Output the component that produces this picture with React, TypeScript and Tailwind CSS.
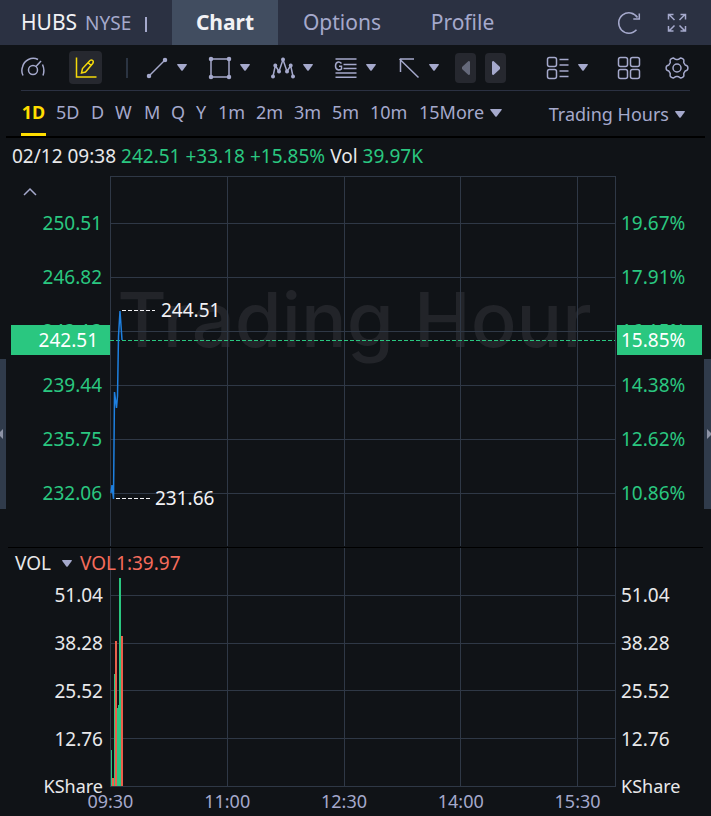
import { ReactNode } from 'react'

const PERIODS = ['5D', 'D', 'W', 'M', 'Q', 'Y', '1m', '2m', '3m', '5m', '10m']
const PERIOD_WIDTHS: Record<string, string> = {
  '5D': 'w-[35px]',
  D: 'w-[24px]',
  W: 'w-[29px]',
  M: 'w-[27px]',
  Q: 'w-[25px]',
  Y: 'w-[22px]',
  '10m': 'w-[49px]',
}
const PRICES = ['250.51', '246.82', '243.13', '239.44', '235.75', '232.06']
const PERCENTS = ['19.67%', '17.91%', '16.15%', '14.38%', '12.62%', '10.86%']
const VOLUMES = ['51.04', '38.28', '25.52', '12.76']
const TIMES = ['09:30', '11:00', '12:30', '14:00', '15:30']

const SESSION_MINUTES = 390
const GRID_X = [90, 180, 270, 360].map((m) => `${(m / SESSION_MINUTES) * 100}%`)
const PRICE_Y = [47, 101, 155, 209, 263, 317]
const VOLUME_Y = [47, 95, 142, 190]

const BARS = [
  { x: 1, w: 1, h: 36, up: true },
  { x: 2, w: 2, h: 8, up: false },
  { x: 4, w: 1, h: 112, up: true },
  { x: 5, w: 2, h: 145, up: false },
  { x: 7, w: 1, h: 78, up: true },
  { x: 8, w: 1, h: 81, up: true },
  { x: 9, w: 2, h: 208, up: true },
  { x: 11, w: 2, h: 150, up: false },
]

// six rounded teeth around the hub
const GEAR = Array.from({ length: 72 }, (_, i) => {
  const a = (i / 72) * Math.PI * 2
  const r = 9.7 + 1.2 * Math.tanh(2 * Math.cos(6 * a))
  return `${(12 + r * Math.cos(a)).toFixed(2)},${(12 + r * Math.sin(a)).toFixed(2)}`
}).join(' ')

function Caret({ big = false }: { big?: boolean }) {
  return (
    <svg className={big ? 'w-3 h-2' : 'w-2.5 h-[7px]'} viewBox="0 0 10 7" preserveAspectRatio="none" fill="currentColor">
      <path d="M0.7 0h8.6q1 0 .4.9L5.7 6.4q-.7.9-1.4 0L.3.9Q-.3 0 .7 0z" />
    </svg>
  )
}

function Icon({ children }: { children: ReactNode }) {
  return (
    <svg className="w-6 h-6" viewBox="0 0 24 24" fill="none" stroke="currentColor" strokeWidth="1.5">
      {children}
    </svg>
  )
}

function Tool({ label, children }: { label: string; children: ReactNode }) {
  return (
    <button aria-label={label} className="flex items-center w-[63px] gap-2">
      <Icon>{children}</Icon>
      <Caret />
    </button>
  )
}

function Header() {
  return (
    <header className="flex items-center h-[45px] bg-[#2b3142] text-[#a5a9cc]">
      <div className="flex items-center w-[172px] pl-[21px] text-[21px]">
        <span className="text-[#f2f2f5]">HUBS</span>
        <span className="ml-2 pt-0.5 text-[19px]">NYSE</span>
        <span className="ml-[14px] mt-1 w-0.5 h-[15px] bg-[#a5a9cc]" />
      </div>
      <nav className="flex h-full text-[21px]">
        <button className="w-[106px] bg-[#414d60] text-[#f2f2f5] font-bold">Chart</button>
        <button className="w-[128px]">Options</button>
        <button className="w-[113px]">Profile</button>
      </nav>
      <div className="flex items-center gap-6 ml-auto pr-[22px]">
        <button aria-label="Refresh">
          <Icon>
            <path d="M19.500 18.800A10.200 10.200 0 1 1 20.500 6.500" />
            <path d="M22.300 2.500V8h-6" />
          </Icon>
        </button>
        <button aria-label="Full screen">
          <Icon>
            <path d="M9.500 9L4 3.500M3.500 8.500v-5h5M14.500 9L20 3.500M15.500 3.500h5v5M9.500 14.500L4 20M3.500 15v5h5M14.500 14.500L20 20M15.500 20h5v-5" />
          </Icon>
        </button>
      </div>
    </header>
  )
}

function Toolbar() {
  return (
    <div className="flex items-center h-[46px] mx-[21px] border-b border-[#2b3142] text-[#a5a9cc]">
      <button aria-label="Indicators">
        <Icon>
          <path d="M2 19.500A11 11 0 0 1 1.500 11 11 11 0 0 1 17 3.500M21.500 8.500q2.500 5.500.5 11" />
          <circle cx="12" cy="14" r="4.500" />
          <path d="M15 10.500L20 5" />
        </Icon>
      </button>
      <button aria-label="Draw" className="flex items-center justify-center w-[33px] h-[33px] ml-6 rounded-sm bg-[#26282f] text-[#f5d90a]">
        <Icon>
          <path d="M2.500 1.500v19.500H22.500" />
          <path d="M7.500 17l1-4.500L16 4.500q1.500-1 2.700 0t0 3L11.500 16zM14 6.500l3 3" />
        </Icon>
      </button>
      <span className="w-0.5 h-5 ml-6 mr-[17px] bg-[#2b3442]" />
      <div className="flex">
        <Tool label="Line">
          <path d="M4 20L20 4" />
          <circle cx="4" cy="20" r="1.500" fill="currentColor" />
          <circle cx="20" cy="4" r="1.500" fill="currentColor" />
        </Tool>
        <Tool label="Shape">
          <path d="M3 3h18v18H3z" />
          <path d="M3 3h.01M21 3h.01M3 21h.01M21 21h.01" strokeWidth="4.500" strokeLinecap="round" />
        </Tool>
        <Tool label="Wave">
          <path d="M2 20.500L4.300 9.500 8 15.500l4-12 4 12 3.700-6L22 20.500" />
          <path d="M2 20.500h.01M4.300 9.500h.01M8 15.500h.01M12 3.500h.01M16 15.500h.01M19.700 9.500h.01M22 20.500h.01" strokeWidth="4" strokeLinecap="round" />
        </Tool>
        <Tool label="Gann">
          <path d="M1.500 3h21M9.500 8.500h13M9.500 12.500h13M1.500 17h21M1.500 21.200h21" />
          <path d="M7.500 7.500Q6 5.800 4.300 6 1.500 6.500 1.500 10t3 4q2 0 3-1v-2.700H5" />
        </Tool>
        <Tool label="Arrow">
          <path d="M2.500 3L21.500 21.500M3.500 16V3H17" />
        </Tool>
      </div>
      <button aria-label="Previous tools" className="flex items-center justify-center w-[21px] h-[30px] -ml-[5px] rounded-sm bg-[#26282f] text-[#65697a]">
        <svg className="w-2 h-[14px]" viewBox="0 0 8 14" fill="currentColor"><path d="M8 1v12q0 1-1.500 1L0 8V6L6.500 0Q8 0 8 1z" /></svg>
      </button>
      <button aria-label="Next tools" className="flex items-center justify-center w-[21px] h-[30px] ml-[9px] rounded-sm bg-[#26282f]">
        <svg className="w-2 h-[14px]" viewBox="0 0 8 14" fill="currentColor"><path d="M0 1v12q0 1 1.500 1L8 8V6L1.500 0Q0 0 0 1z" /></svg>
      </button>
      <div className="flex items-center ml-auto pr-px">
        <Tool label="Layout list">
          <rect x="1.500" y="1.500" width="9" height="9" rx="2" />
          <rect x="1.500" y="13.500" width="9" height="9" rx="2" />
          <path d="M13.500 3.500h9M13.500 9h9M13.500 15h9M13.500 20.500h9" />
        </Tool>
        <button aria-label="Grid layout" className="ml-2">
          <Icon>
            <rect x="1.500" y="1.500" width="9" height="9" rx="2" />
            <rect x="13.500" y="1.500" width="9" height="9" rx="2" />
            <rect x="1.500" y="13.500" width="9" height="9" rx="2" />
            <rect x="13.500" y="13.500" width="9" height="9" rx="2" />
          </Icon>
        </button>
        <button aria-label="Settings" className="ml-6">
          <Icon>
            <circle cx="12" cy="12" r="4" />
            <polygon points={GEAR} strokeLinejoin="round" />
          </Icon>
        </button>
      </div>
    </div>
  )
}

function Periods() {
  return (
    <div className="flex h-[45px] mx-[21px] text-[18px] text-[#a5a9cc]">
      <button className="w-[25px] mr-[10px] h-full border-b-3 border-[#ffdd00] text-[#ffdd00] font-bold">1D</button>
      {PERIODS.map((p) => (
        <button key={p} className={`${PERIOD_WIDTHS[p] ?? 'w-[38px]'} pb-0.5 text-left`}>{p}</button>
      ))}
      <button className="pb-0.5">15</button>
      <button className="flex items-center gap-1.5 pb-0.5">More <Caret big /></button>
      <button className="flex items-center gap-1.5 ml-auto pr-[5px] pt-0.5">Trading Hours <Caret /></button>
    </div>
  )
}

function PricePanel() {
  return (
    <section className="relative flex h-[372px] text-[19px] text-[#2ac780] mx-2 border-b border-black">
      <div className="w-[102px] pt-5 pr-2 text-right">
        {PRICES.map((p) => (
          <div key={p} className="h-[54px] leading-[54px]">{p}</div>
        ))}
      </div>
      <button aria-label="Collapse" className="absolute left-[15px] top-[11px] text-[#a5a9cc]">
        <svg className="w-[14px] h-[9px]" viewBox="0 0 14 9" fill="none" stroke="currentColor" strokeWidth="1.500"><path d="M1 8l6-6 6 6" /></svg>
      </button>
      <div className="relative flex-1 border-r border-[#2f3846]">
        <div className="absolute inset-0 flex items-center justify-center pr-4 pb-[86px] text-[76px] font-medium text-[#222429] font-[Inter,sans-serif] whitespace-nowrap">Trading Hour</div>
        <svg className="absolute inset-0 w-full h-full" shapeRendering="crispEdges">
          <g stroke="#2f3846">
            <path d="M0.500 0v370" />
            <line x1="0" x2="100%" y1="0.500" y2="0.500" />
            <g transform="translate(1 0)">
              {GRID_X.map((x) => <line key={x} x1={x} x2={x} y1="0" y2="370" />)}
            </g>
            {PRICE_Y.map((y) => <line key={y} x1="0" x2="100%" y1={y + 0.5} y2={y + 0.5} />)}
          </g>
          <line x1="0" x2="100%" y1="164.500" y2="164.500" stroke="#2ac780" strokeDasharray="4 2" />
          <path d="M12 134.500h33M6 322.500h34" stroke="#f2f2f5" strokeDasharray="4 2" />
          <path d="M1 317l1-8 1.500 14L4.500 216l2 16 1-12L8.500 160l1.500-25 2 29" stroke="#1e80e0" strokeWidth="1.500" fill="none" shapeRendering="auto" />
        </svg>
        <span className="absolute left-[51px] top-[120px] leading-7 text-[#f2f2f5]">244.51</span>
        <span className="absolute left-[45px] top-[308px] leading-7 text-[#f2f2f5]">231.66</span>
      </div>
      <div className="w-[87px] pt-5 pl-[5px]">
        {PERCENTS.map((p) => (
          <div key={p} className="h-[54px] leading-[54px]">{p}</div>
        ))}
      </div>
      <div className="absolute left-[3px] top-[149px] w-[99px] h-[30px] pr-3 bg-[#2ac780] text-white text-right leading-[30px]">242.51</div>
      <div className="absolute right-[1px] top-[149px] w-[85px] h-[30px] pl-1 bg-[#2ac780] text-white leading-[30px]">15.85%</div>
    </section>
  )
}

function VolumeScale() {
  return (
    <>
      {VOLUMES.map((v) => (
        <div key={v} className="h-12 leading-[48px]">{v}</div>
      ))}
      <div className="text-[18px] leading-[46px]">KShare</div>
    </>
  )
}

function VolumePanel() {
  return (
    <section className="text-[19px] text-[#e8e8ea] mx-2">
      <div className="relative flex h-[239px]">
        <div className="w-[102px] pt-[23px] pr-[7px] text-right">
          <VolumeScale />
        </div>
        <div className="flex-1 border-r border-[#2f3846]">
          <svg className="w-full h-full" shapeRendering="crispEdges">
            <g stroke="#2f3846">
              <path d="M0.500 0v239" />
              <line x1="0" x2="100%" y1="238.500" y2="238.500" />
              <g transform="translate(1 0)">
                {GRID_X.map((x) => <line key={x} x1={x} x2={x} y1="0" y2="239" />)}
              </g>
              {VOLUME_Y.map((y) => <line key={y} x1="0" x2="100%" y1={y + 0.5} y2={y + 0.5} />)}
            </g>
            {BARS.map((b) => (
              <rect key={b.x} x={b.x} y={238 - b.h} width={b.w} height={b.h} fill={b.up ? '#2ac780' : '#e8604c'} />
            ))}
          </svg>
        </div>
        <div className="w-[87px] pt-[23px] pl-[5px]">
          <VolumeScale />
        </div>
        <div className="absolute left-[7px] top-px flex items-center leading-7">
          <button className="flex items-center gap-[11px]">VOL <span className="text-[#a5a9cc]"><Caret /></span></button>
          <span className="ml-2 text-[#f56c5c]">VOL1:39.97</span>
        </div>
      </div>
      <div className="grid grid-cols-5 pl-11 pr-[67px] h-7 text-[18px] leading-7 text-center text-[#a5a9cc]">
        {TIMES.map((t) => <span key={t}>{t}</span>)}
      </div>
    </section>
  )
}

export default function App() {
  return (
    <main className="relative min-h-screen bg-[#101317] font-['Noto_Sans',sans-serif]">
      <Header />
      <Toolbar />
      <Periods />
      <div className="mx-1.5 border-t-2 border-black" />
      <div className="flex items-center gap-[5px] h-[38px] pl-3 pb-0.5 text-[19px] text-[#2ac780]">
        <span className="text-[#e8e8ea]">02/12 09:38</span>
        <span>242.51</span>
        <span>+33.18</span>
        <span>+15.85%</span>
        <span className="text-[#e8e8ea]">Vol</span>
        <span>39.97K</span>
      </div>
      <PricePanel />
      <VolumePanel />
      <button aria-label="Open left panel" className="absolute left-0 top-[359px] flex items-center w-1.5 h-[150px] bg-[#303b4b] text-[#8d93a5]">
        <svg className="w-[3px] h-2.5" viewBox="0 0 3 10" fill="currentColor"><path d="M3 0v10L0 7V3z" /></svg>
      </button>
      <button aria-label="Open right panel" className="absolute right-0 top-[359px] flex items-center justify-end w-[7px] h-[150px] bg-[#303b4b] text-[#8d93a5]">
        <svg className="w-1 h-2.5" viewBox="0 0 4 10" fill="currentColor"><path d="M0 0v10l4-4V4z" /></svg>
      </button>
    </main>
  )
}
